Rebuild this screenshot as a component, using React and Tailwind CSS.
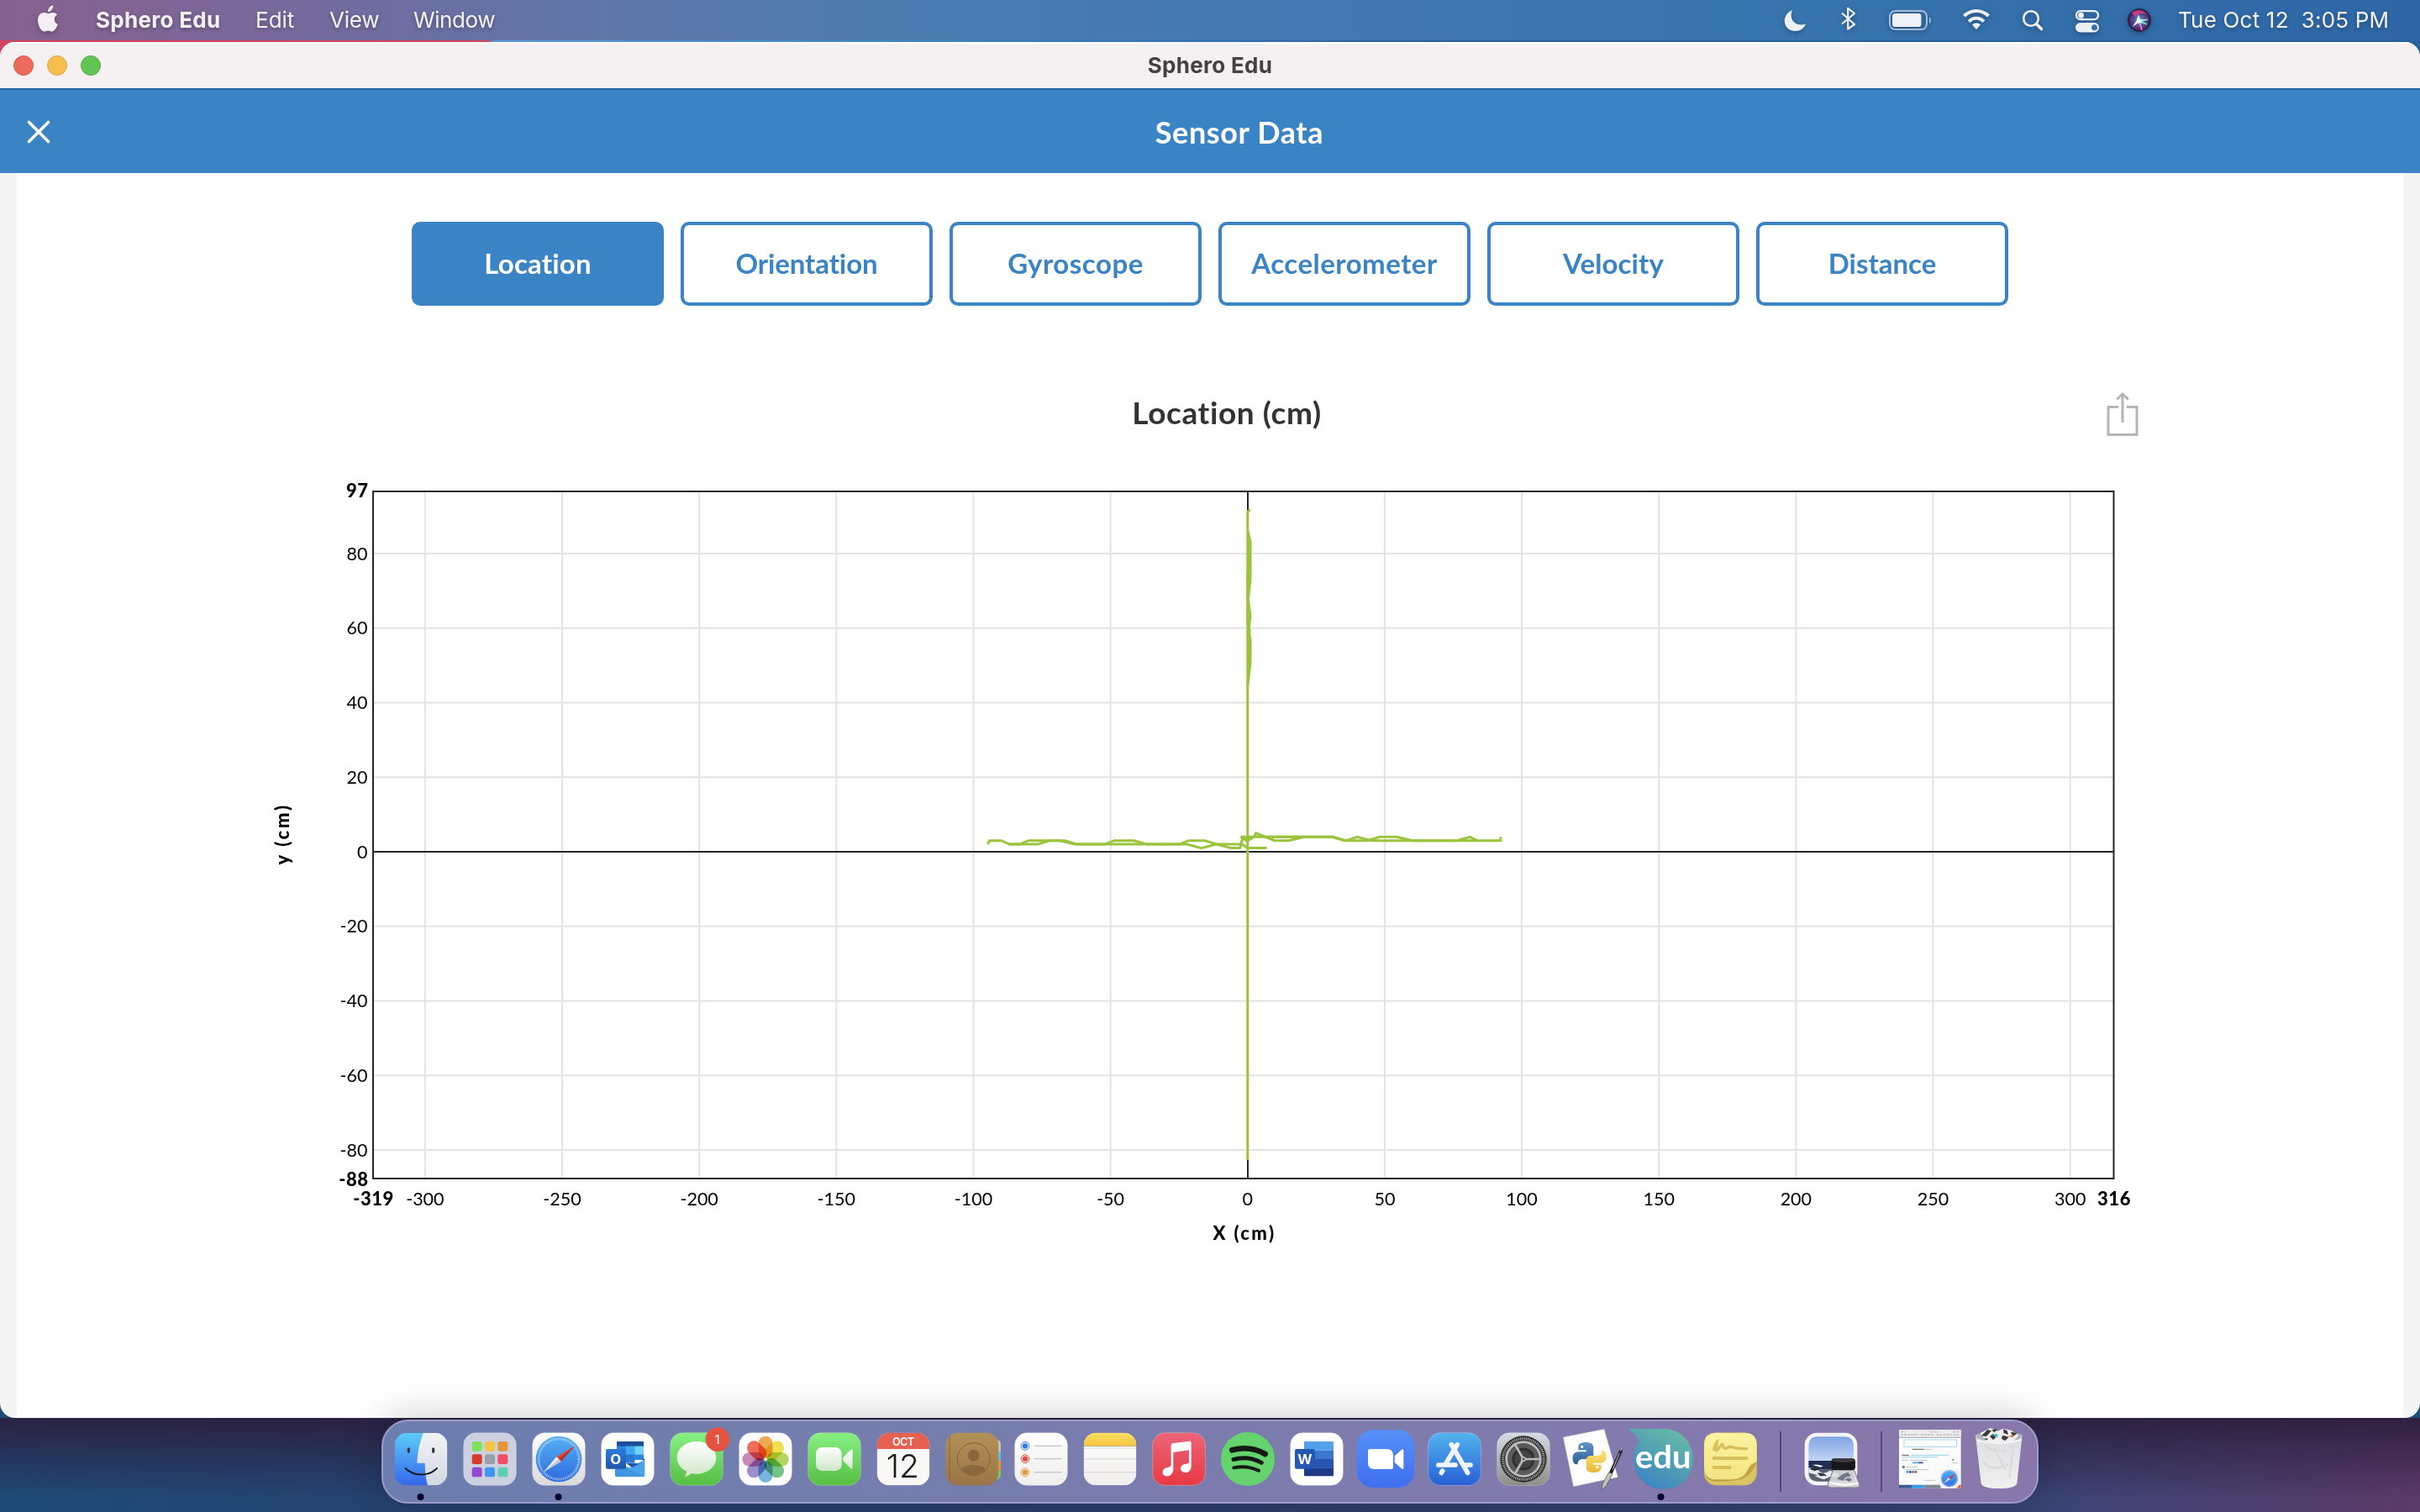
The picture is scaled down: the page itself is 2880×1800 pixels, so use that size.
import React from "react";

/* ---------- menu bar ---------- */

const AppleIcon = () => (
  <svg viewBox="0 0 26 34" className="h-[34px] w-[26px]" fill="#f3eef5">
    <path d="M13.6 10.2c-1.3 0-3-1.3-5-1.2C4.200 9.100 1 12.600 1 18.200c0 6 4 13.300 7.600 13.300 1.600 0 2.600-1.100 4.600-1.100 2 0 2.800 1.100 4.600 1.100 3.200 0 5.900-5.200 7-8.400-2.600-1.100-4-3.200-4-6 0-2.500 1.200-4.300 3.300-5.600C22.700 9.800 20.600 9 18.500 9c-2.200 0-3.600 1.200-4.900 1.200z" />
    <path d="M13 8.200c-.2-3.700 2.600-7.300 6.200-7.900.4 3.700-2.500 7.700-6.200 7.900z" />
  </svg>
);

const StatusIcons = () => (
  <svg viewBox="2110 0 460 48" className="h-[48px] w-[460px] drop-shadow-[0_2px_3px_rgba(0,0,0,0.3)]">
    <defs>
      <radialGradient id="siri" cx="0.5" cy="0.5" r="0.5">
        <stop offset="0" stopColor="#8fb8d8" />
        <stop offset="0.4" stopColor="#4a5fa8" />
        <stop offset="0.8" stopColor="#5b2a6e" />
        <stop offset="1" stopColor="#1d1a38" />
      </radialGradient>
    </defs>
    <path d="M2133 12c-5.500 2.300-9.200 7-9.200 12.800C2123.800 32 2129 37 2136.500 37c5.800 0 10.500-3.200 12.500-8.500-1.800.7-3.500 1-5.300 1-7.200 0-12-4.700-12-11.300 0-2.200.4-4.200 1.300-6.200z" fill="#edf1f6" />
    <path d="M2192 15.500l15 13.500-7.800 5.500V9.800l7.800 6.200-15 12.500" fill="none" stroke="#edf1f6" strokeWidth="2.200" strokeLinejoin="round" />
    <rect x="2249" y="13" width="44" height="22" rx="6.500" fill="none" stroke="#a3bcd7" strokeWidth="2" />
    <rect x="2252" y="16" width="34.500" height="16" rx="3.500" fill="#edf1f6" />
    <path d="M2296 20.500c2.500.5 2.500 6.500 0 7.500z" fill="#a3bcd7" />
    <g fill="none" stroke="#edf1f6" strokeWidth="4">
      <path d="M2337.500 19c8.500-8 20.500-8 29 0" />
      <path d="M2343 25.500c5.500-5 12.500-5 18 0" />
    </g>
    <path d="M2352 35l-5-5.600c2.900-2.600 7.100-2.600 10 0z" fill="#edf1f6" />
    <circle cx="2417" cy="22" r="8.800" fill="none" stroke="#edf1f6" strokeWidth="2.600" />
    <path d="M2423.500 28.500l6 6" stroke="#edf1f6" strokeWidth="3.600" strokeLinecap="round" />
    <rect x="2471" y="13.200" width="26" height="10" rx="5" fill="none" stroke="#edf1f6" strokeWidth="2.300" />
    <circle cx="2476.500" cy="18.200" r="3.500" fill="#edf1f6" />
    <rect x="2470" y="27" width="28" height="11.500" rx="5.700" fill="#edf1f6" />
    <circle cx="2492.500" cy="32.700" r="3.500" fill="#3570ab" />
    <circle cx="2546" cy="24" r="13.500" fill="url(#siri)" stroke="#1c2347" />
    <path d="M2537 15c5-4 13-4 18 2-5-2-12-1-14 3z" fill="#d8407f" opacity=".85" />
    <path d="M2545 17l2 6.500 9-1-7.500 3 5 3.500-6-2 1.500 8-4-8-7.500 5 5-7z" fill="#e9feff" />
    <path d="M2546.500 27l2.500 9" stroke="#f07ab8" strokeWidth="1.800" />
    <path d="M2549 25l7-1.500M2549 26l6 3" stroke="#5fe0b0" strokeWidth="1.500" />
  </svg>
);

const MenuBar = () => (
  <header className="flex h-[48px] w-full items-center bg-[linear-gradient(90deg,#86618f_0%,#7c6799_9%,#6e6da0_16%,#5f77a9_25%,#4a7bb0_38%,#3f78af_60%,#3774ad_75%,#2e66a6_100%)] text-[26px] text-[#f4f2f7] [text-shadow:0_2px_5px_rgba(0,0,0,0.3)]">
    <div className="flex w-[114px] items-center pb-[2px] pl-[44px] drop-shadow-[0_2px_3px_rgba(0,0,0,0.25)]">
      <AppleIcon />
    </div>
    <div className="w-[190px] whitespace-nowrap pb-[2px] font-bold tracking-[0.3px]">Sphero Edu</div>
    <div className="w-[88px] pb-[2px]">Edit</div>
    <div className="w-[100px] pb-[2px] tracking-[-0.2px]">View</div>
    <div className="w-[110px] pb-[2px] tracking-[-0.4px]">Window</div>
    <div className="flex-1" />
    <StatusIcons />
    <div className="w-[310px] whitespace-pre pb-[2px] pl-[22px] tracking-[0.2px]">Tue Oct 12  3:05 PM</div>
  </header>
);

/* ---------- window ---------- */

const TitleBar = () => (
  <div className="flex h-[57px] items-center border-b-[2px] border-[#2467a6] bg-[#f5f1f3] shadow-[inset_0_2px_0_#ffffff]">
    <div className="flex w-[240px] gap-[16px] pl-[16px]">
      <div className="h-[24px] w-[24px] rounded-full border border-[#d8564a] bg-[#ed6a5e]" />
      <div className="h-[24px] w-[24px] rounded-full border border-[#d9a53e] bg-[#f5bf4f]" />
      <div className="h-[24px] w-[24px] rounded-full border border-[#52a840] bg-[#62c655]" />
    </div>
    <div className="flex-1 pb-[1px] text-center text-[26px] font-bold tracking-[0.3px] text-[#444143]">Sphero Edu</div>
    <div className="w-[240px]" />
  </div>
);

const TABS = [
  ["Location", "tracking-[0.2px]"],
  ["Orientation", "tracking-[-0.1px]"],
  ["Gyroscope", "tracking-[0.5px]"],
  ["Accelerometer", "tracking-[0.5px]"],
  ["Velocity", "tracking-[0.1px]"],
  ["Distance", "tracking-[0px]"],
];

const Tabs = () => (
  <nav className="flex justify-center gap-[20px]">
    {TABS.map(([label, tracking], i) => (
      <button
        key={label}
        className={
          "flex h-[100px] w-[300px] items-center justify-center rounded-[10px] border-[4px] border-[#3a84c5] font-['Lato'] text-[33px] font-bold [font-variant-ligatures:none] " +
          tracking +
          (i === 0 ? " bg-[#3a84c5] text-white" : " bg-white text-[#3a84c5]")
        }
      >
        {label}
      </button>
    ))}
  </nav>
);

/* ---------- chart ---------- */

const X0 = 1484.75;
const Y0 = 1014;
const xAt = (v) => X0 + v * 3.263;
const yAt = (v) => Y0 - v * 4.4375;

const X_TICKS = [-300, -250, -200, -150, -100, -50, 0, 50, 100, 150, 200, 250, 300];
const Y_TICKS = [80, 60, 40, 20, 0, -20, -40, -60, -80];

// Horizontal travel: [offset along the run, height in cm]
const RUNS = [
  [[36, 2], [42, 3], [75, 3], [98, 2], [178, 2], [212, 3], [255, 3], [290, 2], [600, 2], [640, 1], [683, 2], [725, 1], [750, 1], [758, 3.8], [772, 3], [790, 4], [795, 5], [848, 3], [888, 3], [932, 4]],
  [[98, 2], [128, 2], [152, 3], [240, 3], [283, 2], [368, 2], [395, 3], [450, 3], [488, 2], [578, 2], [605, 3], [650, 3], [685, 2], [755, 2], [772, 1], [826, 1]],
  [[752, 4], [1012, 4], [1050, 3], [1082, 4], [1120, 3], [1487, 3], [1487, 4]],
  [[752, 4], [768, 3], [780, 4]],
  [[795, 5], [822, 4], [1012, 4], [1045, 3], [1110, 3], [1145, 4], [1193, 4], [1238, 3], [1364, 3], [1400, 4], [1421, 3]],
];
const runPoints = (run) => run.map(([x, v]) => `${(1160 + x / 2.376).toFixed(1)},${yAt(v).toFixed(1)}`).join(" ");

const Chart = () => (
  <svg viewBox="300 560 2260 940" className="h-[940px] w-[2260px] font-['Lato'] text-[21.5px]" fill="#000">
    <g stroke="#e3e3e3" strokeWidth="2">
      {X_TICKS.filter((v) => v !== 0).map((v) => (
        <path key={v} d={`M${xAt(v)} 585V1403`} />
      ))}
      {Y_TICKS.filter((v) => v !== 0).map((v) => (
        <path key={v} d={`M444 ${yAt(v)}H2515`} />
      ))}
    </g>
    <g stroke="#262626" strokeWidth="2" fill="none">
      <path d="M444 1014H2515M1485 585V1403" />
      <rect x="444" y="585" width="2071.500" height="818" />
    </g>
    <g fill="none" stroke="#9ac43c" strokeWidth="3">
      {RUNS.map((run, i) => (
        <polyline key={i} points={runPoints(run)} />
      ))}
      <path d="M1487.700 606.500l-2.900 3V1381" />
      <path d="M1485 632l3 13v45l-2.800 23 2.800 20-2 17 2 12v27l-3 26" />
      <path d="M1485 648l2.300 12v7l-2.300 16v57l2.300 12-2.300 8" />
      <path d="M1486 645V710M1486 762V800" />
    </g>
    <g textAnchor="end">
      {Y_TICKS.map((v) => (
        <text key={v} x="437.500" y={yAt(v) + 7.5}>{v}</text>
      ))}
      <g className="text-[22px] font-black tracking-[0.5px]">
        <text x="438.500" y="592">97</text>
        <text x="438.500" y="1412">-88</text>
      </g>
    </g>
    <g textAnchor="middle">
      {X_TICKS.map((v) => (
        <text key={v} x={xAt(v)} y="1435">{v}</text>
      ))}
      <g className="text-[22px] font-black tracking-[0.5px]">
        <text x="444.500" y="1435">-319</text>
        <text x="2516" y="1435">316</text>
        <text x="1480" y="1476" textLength="73">X (cm)</text>
        <text transform="translate(344 994) rotate(-90)" textLength="71">y (cm)</text>
      </g>
    </g>
  </svg>
);

const ShareIcon = () => (
  <svg viewBox="0 0 40 54" className="h-[54px] w-[40px]" fill="none" stroke="#b5b5b5" strokeWidth="3">
    <path d="M15 18.500H3v33h34v-33H25" />
    <path d="M20 37V4M13.200 9.500L20 3l6.800 6.500" />
  </svg>
);

const Close = () => (
  <svg viewBox="0 0 28 28" className="h-[28px] w-[28px]" stroke="#fff" strokeWidth="3.600" strokeLinecap="round">
    <path d="M2.500 2.500l23 23M25.500 2.500l-23 23" />
  </svg>
);

const SensorWindow = () => (
  <main className="flex h-[1638px] flex-col overflow-hidden rounded-[18px] bg-[#f5f5f5]">
    <TitleBar />
    <div className="flex h-[99px] items-center bg-[#3a84c5] px-[32px] text-white">
      <div className="w-[200px]"><Close /></div>
      <h1 className="flex-1 text-center font-['Lato'] text-[36px] font-bold tracking-[0.6px]">Sensor Data</h1>
      <div className="w-[130px]" />
    </div>
    <section className="mx-[20px] flex-1 bg-white pt-[58px]">
      <Tabs />
      <div className="flex h-[196px] items-start pl-[440px] pt-[98px]">
        <h2 className="w-[2000px] pt-[3px] text-center font-['Lato'] text-[37px] leading-[52px] font-bold tracking-[0.6px] text-[#333] [font-variant-ligatures:none]">
          Location (cm)
        </h2>
        <div className="ml-[46px] pt-[4px]"><ShareIcon /></div>
      </div>
      <div className="pl-[280px]"><Chart /></div>
    </section>
  </main>
);

/* ---------- dock ---------- */

// Each dock tile is 82 px wide; `o` shifts the tile's 3x artwork grid into place.
const Tile = ({ o, children, dot }) => (
  <svg viewBox="0 0 82 96" className="h-[96px] w-[82px] shrink-0 overflow-visible">
    <g transform={`translate(${o} -22) scale(0.33333)`}>{children}</g>
    {dot && <circle cx="40.500" cy="90" r="4" fill="#04042e" />}
  </svg>
);

const Sq = ({ x, fill, w = 188 }) => (
  <rect x={x} y="107" width={w} height="188" rx="44" fill={fill} stroke="#fff" strokeOpacity=".25" strokeWidth="3" />
);

const Grad = ({ id, a, b }) => (
  <linearGradient id={id} x1="0" y1="0" x2="0" y2="1">
    <stop offset="0" stopColor={a} />
    <stop offset="1" stopColor={b} />
  </linearGradient>
);

const Compass = ({ cx, cy, r }) => (
  <g transform={`translate(${cx} ${cy}) scale(${r / 82})`}>
    <circle r="82" fill="url(#safariBlue)" />
    <circle r="72" fill="none" stroke="#d5e8fa" strokeWidth="9" strokeDasharray="2.200 4.080" />
    <path d="M58-48L-8-8 8 8z" fill="#e2463c" />
    <path d="M-54 46L-8-8 8 8z" fill="#f3f3f3" />
    <path d="M58-48L0 0 8 8z" fill="#b93028" />
    <path d="M-54 46L0 0 8 8z" fill="#c4c9cf" />
  </g>
);

const LAUNCH = [
  ["#7de35e", "#f5c242", "#e8963a"],
  ["#d63a2c", "#98a0a6", "#ee4d62"],
  ["#9746cf", "#3d97f0", "#62ceb0"],
];
const PETALS = ["#f0962c", "#f0dc2c", "#a4d03c", "#58b86a", "#5aa8dc", "#8a78c0", "#c070a8", "#ec4c38"];

const Separator = () => (
  <div className="flex h-[72px] w-[38px] shrink-0 justify-center">
    <div className="w-[2px] bg-[#544a80]" />
  </div>
);

const Dock = () => (
  <footer className="relative flex h-[100px] w-[1972px] items-center rounded-[32px] border-[2px] border-[#9a9bc8] bg-[linear-gradient(100deg,#6b7dae_0%,#737ead_25%,#7c7cad_55%,#8579ad_80%,#8877aa_100%)] px-[4px] shadow-[0_0_50px_rgba(0,0,0,0.24)]">
    <svg className="absolute h-0 w-0">
      <defs>
        <Grad id="finderL" a="#5ecbf8" b="#3467ea" />
        <Grad id="finderR" a="#f2f2f4" b="#d3d9e2" />
        <Grad id="white" a="#ffffff" b="#d9d9d9" />
        <Grad id="safariBlue" a="#55b0f2" b="#2f6be0" />
        <Grad id="green" a="#88f082" b="#56be44" />
        <Grad id="bubble" a="#ffffff" b="#cfe6c8" />
        <Grad id="brown" a="#b39257" b="#9a7446" />
        <Grad id="paper" a="#ffffff" b="#efeeec" />
        <Grad id="note" a="#f9df62" b="#f6c63e" />
        <Grad id="music" a="#ee6478" b="#e63a44" />
        <Grad id="zoomBg" a="#5690f7" b="#3f6ff0" />
        <Grad id="store" a="#51b4ee" b="#2a5fd6" />
        <Grad id="gearBg" a="#d4dde4" b="#8f8c88" />
        <linearGradient id="eduBg" x1="0.8" y1="0" x2="0.2" y2="1">
          <stop offset="0" stopColor="#66bda6" />
          <stop offset="1" stopColor="#3b7fc4" />
        </linearGradient>
        <Grad id="sticky" a="#fbf3a0" b="#f4e584" />
        <Grad id="sky" a="#7fa3e4" b="#c3d6f2" />
        <Grad id="pyBlue" a="#5f95c9" b="#2f5f94" />
        <Grad id="pyYellow" a="#fbe27a" b="#eab93a" />
        <Grad id="trash" a="#dcdce0" b="#f0f0f0" />
        <Grad id="outlook" a="#2f7bd8" b="#1f55ae" />
        <clipPath id="finderClip"><rect x="89" y="107" width="188" height="188" rx="44" /></clipPath>
        <clipPath id="calClip"><rect x="311" y="107" width="188" height="188" rx="44" /></clipPath>
        <clipPath id="noteClip"><rect x="1049" y="107" width="188" height="188" rx="44" /></clipPath>
      </defs>
    </svg>

    {/* Finder */}
    <Tile o={-20} dot>
      <g clipPath="url(#finderClip)">
        <rect x="89" y="107" width="188" height="188" fill="url(#finderL)" />
        <path d="M192 107c-14 34-22 70-23 108h28c0 28 3 54 10 80h70V107z" fill="url(#finderR)" />
      </g>
      <path d="M139 164v11M227 164v11" stroke="#26303f" strokeWidth="9" strokeLinecap="round" />
      <path d="M127 234c32 30 82 30 113 0" fill="none" stroke="#15181f" strokeWidth="5.500" strokeLinecap="round" />
    </Tile>
    {/* Launchpad */}
    <Tile o={-102}>
      <Sq x={335} fill="#ccd0e1" />
      {LAUNCH.map((row, r) => row.map((c, i) => (
        <rect key={r + "-" + i} x={365 + i * 46} y={138 + r * 46} width="36" height="35" rx="8" fill={c} />
      )))}
    </Tile>
    {/* Safari */}
    <Tile o={-184} dot>
      <Sq x={581} fill="url(#white)" />
      <Compass cx={675} cy={201} r={82} />
    </Tile>
    {/* Outlook */}
    <Tile o={-266}>
      <Sq x={827} fill="#fff" />
      <path d="M882 142q0-4 4-4h88q4 0 4 4v62h-96z" fill="#2a86dc" />
      <path d="M882 142q0-4 4-4h88q4 0 4 4v13h-96z" fill="#1c4f98" />
      <path d="M946 155h32v30h-32z" fill="#6fd3fb" />
      <path d="M914 155h32v30h-32z" fill="#3fa8ee" />
      <path d="M914 185h32v30h-32z" fill="#2c78d2" />
      <path d="M876 216l54 16 52-30v57q0 5-5 5h-96q-5 0-5-5z" fill="#4ba4e8" />
      <path d="M916 216h50l-30 15z" fill="#1d58a8" />
      <path d="M876 216l106 46q-2 2-5 2h-96q-5 0-5-5z" fill="#3f97e2" />
      <rect x="843" y="165" width="72" height="71" rx="6" fill="url(#outlook)" />
      <text x="878.500" y="218" textAnchor="middle" fontSize="49" fontWeight="700" fill="#fff" className="font-['Open_Sans']">O</text>
      <circle cx="979" cy="202" r="2.500" fill="#111" />
    </Tile>
    {/* Messages */}
    <Tile o={-348}>
      <Sq x={1073} fill="url(#green)" />
      <path d="M1167 138c39 0 70 26 70 58s-31 58-70 58c-7 0-13-1-19-2-6 6-15 11-25 12 5-6 8-13 8-19-21-11-34-29-34-49 0-32 31-58 70-58z" fill="url(#bubble)" />
      <circle cx="1242" cy="131" r="43" fill="#e5523f" />
      <text x="1241" y="148" textAnchor="middle" fontSize="45" fill="#fff">1</text>
    </Tile>
    {/* Photos */}
    <Tile o={-430}>
      <Sq x={1319} fill="#fdfdfd" />
      {PETALS.map((c, i) => (
        <rect key={c} x="1388" y="119" width="50" height="78" rx="25" fill={c} opacity=".82" transform={`rotate(${i * 45} 1413 202)`} className="mix-blend-multiply" />
      ))}
      <circle cx="1413" cy="202" r="4" fill="#fff" />
    </Tile>
    {/* FaceTime */}
    <Tile o={-12}>
      <Sq x={65} fill="url(#green)" />
      <rect x="93" y="159" width="92" height="84" rx="22" fill="url(#bubble)" />
      <path d="M190 196l26-27q8-7 8 3v58q0 10-8 3l-26-26z" fill="url(#bubble)" />
    </Tile>
    {/* Calendar */}
    <Tile o={-94}>
      <g clipPath="url(#calClip)">
        <rect x="311" y="107" width="188" height="188" fill="#f9f8f7" />
        <rect x="311" y="107" width="188" height="58" fill="#e5604f" />
      </g>
      <text x="405" y="152" textAnchor="middle" fontSize="38" fontWeight="600" fill="#fff" textLength="78">OCT</text>
      <text x="403" y="267" textAnchor="middle" fontSize="116" fontWeight="300" fill="#1c1c1c" textLength="118" lengthAdjust="spacingAndGlyphs">12</text>
    </Tile>
    {/* Contacts */}
    <Tile o={-176}>
      <path d="M735 130q18 4 18 20v24h-18z" fill="#c9c9c9" />
      <path d="M735 174h18v34h-18z" fill="#5fc0ee" />
      <path d="M735 208h18v34h-18z" fill="#f2922c" />
      <path d="M735 242h18v12q0 16-18 22z" fill="#6ad567" />
      <rect x="557" y="107" width="188" height="188" rx="44" fill="url(#brown)" />
      <path d="M570 122v158" stroke="#83633a" strokeWidth="3" />
      <circle cx="656" cy="201" r="58" fill="none" stroke="#80613a" strokeWidth="3" />
      <circle cx="656" cy="188" r="21" fill="#8a693e" />
      <path d="M612 238c20-22 66-22 88 0-18 28-68 28-88 0z" fill="#8a693e" />
    </Tile>
    {/* Reminders */}
    <Tile o={-258}>
      <Sq x={803} fill="url(#paper)" />
      {[["#2f74e8", 154], ["#e4473a", 200], ["#ea9132", 248]].map(([c, y]) => (
        <g key={y}>
          <circle cx="840" cy={y} r="9.500" fill={c} />
          <circle cx="840" cy={y} r="14.500" fill="none" stroke={c} strokeWidth="3" />
          <path d={`M873 ${y}h98`} stroke="#b5b5bb" strokeWidth="3" />
        </g>
      ))}
    </Tile>
    {/* Notes */}
    <Tile o={-340}>
      <g clipPath="url(#noteClip)">
        <rect x="1049" y="107" width="188" height="188" fill="url(#paper)" />
        <rect x="1049" y="107" width="188" height="47" fill="url(#note)" />
        <path d="M1049 155h188" stroke="#b9a98a" strokeWidth="3" />
        <path d="M1052 163h184" stroke="#b8b8b8" strokeWidth="3" strokeDasharray="3 4" />
        <path d="M1049 201h188M1049 248h188" stroke="#d2d2d2" strokeWidth="3" />
      </g>
    </Tile>
    {/* Music */}
    <Tile o={-422}>
      <Sq x={1295} fill="url(#music)" />
      <path d="M1361 151q0-5 5-6l60-8q7-1 7 6v84c0 12-8 22-21 22-10 0-17-6-17-14 0-10 9-16 19-17 8-1 11-3 11-9v-40l-56 8v59c0 14-9 26-22 26-10 0-16-6-16-14 0-10 8-16 17-17 9-1 13-4 13-11z" fill="#fff" />
    </Tile>
    {/* Spotify */}
    <Tile o={-4}>
      <circle cx="135" cy="201" r="96" fill="#65d46e" />
      <g fill="none" stroke="#121a12" strokeLinecap="round">
        <path d="M79 169c40-11 82-7 118 14" strokeWidth="20" />
        <path d="M84 202c35-9 70-5 100 12" strokeWidth="15" />
        <path d="M85 232c31-7 61-3 89 10" strokeWidth="12" />
      </g>
    </Tile>
    {/* Word */}
    <Tile o={-86}>
      <Sq x={287} fill="#fff" />
      <path d="M336 170v-28q0-4 4-4h97q4 0 4 4v28z" fill="#55a0ea" />
      <path d="M336 170h105v31H336z" fill="#3c76cc" />
      <path d="M336 201h105v31H336z" fill="#2755b4" />
      <path d="M336 232h105v26q0 4-4 4h-97q-4 0-4-4z" fill="#1d3b88" />
      <rect x="303" y="165" width="72" height="71" rx="6" fill="#2456b4" />
      <text x="339" y="218" textAnchor="middle" fontSize="49" fontWeight="700" fill="#fff" textLength="49" lengthAdjust="spacingAndGlyphs" className="font-['Open_Sans']">W</text>
    </Tile>
    {/* Zoom */}
    <Tile o={-168}>
      <rect x="524" y="97" width="206" height="206" rx="58" fill="url(#zoomBg)" />
      <path d="M564 172q0-7 7-7h60q23 0 23 23v42q0 7-7 7h-60q-23 0-23-23zM659 190l25-22q7-5 7 3v61q0 8-7 3l-25-22z" fill="#fff" />
    </Tile>
    {/* App Store */}
    <Tile o={-250}>
      <Sq x={779} fill="url(#store)" />
      <g stroke="#f1f6fd" strokeWidth="17" strokeLinecap="round" fill="none">
        <path d="M883 149l-42 70M816 222h60M830 243l-4 7" />
        <path d="M862 149l58 101M908 222h22" />
      </g>
    </Tile>
    {/* System Preferences */}
    <Tile o={-332}>
      <Sq x={1025} fill="url(#gearBg)" />
      <circle cx="1119" cy="201" r="83" fill="#2f2f30" />
      <circle cx="1119" cy="201" r="73" fill="none" stroke="#a9a9a9" strokeWidth="9" strokeDasharray="3.500 3.500" />
      <circle cx="1119" cy="201" r="61" fill="#5b5b5b" stroke="#bcbec0" strokeWidth="8" />
      <circle cx="1119" cy="201" r="36" fill="#434343" stroke="#303030" strokeWidth="9" />
      <path d="M1119 201h61M1119 201l-31-54M1119 201l-31 54" stroke="#b9bbbd" strokeWidth="8" />
      <circle cx="1119" cy="201" r="9" fill="#b9bbbd" />
      <circle cx="1119" cy="201" r="4" fill="#444" />
    </Tile>
    {/* IDLE */}
    <Tile o={-414}>
      <path d="M1260 122l148-29 49 173-160 34z" fill="#fdfdfd" stroke="#8b84a0" strokeWidth="2" />
      <path d="M1315 158c0-12 12-17 27-17 17 0 27 6 27 18v26c0 10-7 16-17 16h-22c-11 0-17 7-17 18-13 3-18-8-18-22 0-13 7-22 20-22h28v-6h-28z" fill="url(#pyBlue)" />
      <path d="M1397 231c0 12-12 18-27 18-17 0-27-7-27-19v-25c0-10 7-16 17-16h22c11 0 17-7 17-18 12-2 16 8 16 22 0 13-7 22-20 22h-27v6h29z" fill="url(#pyYellow)" />
      <circle cx="1328" cy="157" r="5" fill="#fff" />
      <circle cx="1383" cy="230" r="5" fill="#fff" />
      <path d="M1467 172l-37 80" stroke="#1d2028" strokeWidth="12" strokeLinecap="round" />
      <path d="M1470 160l-5 13M1462 180l-24 58" stroke="#9da1b4" strokeWidth="4" />
      <path d="M1424 248l14 6-22 40-18 18 4-24z" fill="#c3c0b9" stroke="#55524f" strokeWidth="2" />
    </Tile>
    {/* Sphero Edu */}
    <Tile o={4} dot>
      <path d="M-3 93h126c56 0 102 48 102 108s-46 108-106 108-108-48-108-108c0-24 8-45 21-66-8-18-20-28-34-34-5-3-5-8-1-8z" fill="url(#eduBg)" />
      <text x="118" y="235" textAnchor="middle" fontSize="114" fontWeight="700" fill="#fff" textLength="200" lengthAdjust="spacingAndGlyphs" className="font-['Lato']">edu</text>
    </Tile>
    {/* Stickies */}
    <Tile o={-78}>
      <rect x="264" y="107" width="188" height="188" rx="44" fill="#d9c463" />
      <path d="M308 107h100q44 0 44 44v62q-14 40-52 60-50 10-92 8-44 0-44-44v-86q0-44 44-44z" fill="#c2a443" />
      <path d="M308 107h100q44 0 44 44v60q-24 6-34 32-14 28-50 31h-60q-44 0-44-44v-79q0-44 44-44z" fill="url(#sticky)" />
      <path d="M299 171c2-16 5-26 11-31-2 14-6 27-3 31 8-1 13-20 23-23 4 6 0 14 8 15 10 0 12-8 22-6 14 6 34 8 60 6" fill="none" stroke="#d8bf5c" strokeWidth="10" />
      <path d="M294 198h126M294 231h67" stroke="#d8bf5c" strokeWidth="12" />
    </Tile>

    <Separator />

    {/* Preview */}
    <Tile o={-198}>
      <rect x="623" y="107" width="188" height="188" rx="44" fill="#f4f4f6" />
      <path d="M637 207v-52q0-34 34-34h93q34 0 34 34v52z" fill="url(#sky)" />
      <path d="M637 207h161v30H637z" fill="#1f2d55" />
      <path d="M637 236h161v45H671q-34 0-34-34z" fill="#5a6270" />
      <path d="M637 232q28 2 40 14t36-4l30 10v14l-50-2-56-14zM650 222q20-4 40 4l-10 4zM660 262l30-10 20 14-20 8z" fill="#e6edf4" />
      <path d="M640 236l20-8 16 10-18 6zM668 250l20 2 16 8-26 2zM690 236l16-6 14 6z" fill="#33302f" />
      <path d="M727 234h70l22 56q2 12-12 13h-88q-16-2-13-13z" fill="#d9dadb" fillOpacity=".9" stroke="#76767a" strokeWidth="3" />
      <path d="M738 272l18-16 14 6-8 16zM758 255l20-7 10 14-18 4zM766 274l14-6 12 6-10 8z" fill="#6d7687" />
      <path d="M712 284q50 18 102 2" fill="none" stroke="#fff" strokeWidth="6" />
      <rect x="718" y="199" width="86" height="42" rx="12" fill="#18181a" />
      <ellipse cx="761" cy="206" rx="40" ry="7" fill="#3a3a3e" />
    </Tile>

    <Separator />

    {/* Minimised browser window */}
    <Tile o={-318}>
      <rect x="960" y="96" width="221" height="209" fill="#fbfbfb" />
      <path d="M960 96h221v28H960z" fill="#ececee" />
      <path d="M960 124h221" stroke="#b5b5b8" strokeWidth="4" />
      <path d="M967 104h16M1070 104h28M1153 104h22M967 114h62M1038 114h48M1094 114h80" stroke="#b9b9bd" strokeWidth="4" strokeDasharray="8 4" />
      <rect x="978" y="132" width="187" height="25" fill="#fff" stroke="#9bd8e6" strokeWidth="3" />
      <path d="M1007 166h42M970 187h26" stroke="#555" strokeWidth="3" />
      <path d="M1050 166h28M970 205h22M998 205h62M1150 214h20M986 229h40M985 239h80M1050 277h40" stroke="#c0c0c0" strokeWidth="3" />
      <path d="M1002 187h136M972 194h128" stroke="#8fd2e4" strokeWidth="3" />
      <path d="M1008 214h18" stroke="#3fa7dc" strokeWidth="5" />
      <path d="M1028 214h18" stroke="#2f4d8f" strokeWidth="5" />
      <circle cx="1153" cy="204" r="3" fill="#d33" />
      <circle cx="976" cy="229" r="5" fill="#777" />
      <circle cx="990" cy="247" r="4.500" fill="#38a1dc" />
      <circle cx="1000" cy="247" r="4.500" fill="#3b5998" />
      <circle cx="1010" cy="247" r="4.500" fill="#3c8ac8" />
      <circle cx="1020" cy="247" r="4.500" fill="#d9433a" />
      <path d="M960 293h45v12h-45z" fill="#3b5998" />
      <path d="M1005 293h44v12h-44z" fill="#2f97ee" />
      <path d="M1049 293h60v12h-60z" fill="#7d8791" />
      <path d="M1165 293h16v12h-16z" fill="#e4624c" />
      <rect x="1105" y="235" width="70" height="70" rx="16" fill="#f1f1f1" />
      <Compass cx={1140} cy={270} r={30} />
    </Tile>
    {/* Trash */}
    <Tile o={-400}>
      <path d="M1233 116q83-30 167 0l-19 172q-6 18-64 18t-64-18z" fill="url(#trash)" />
      <ellipse cx="1317" cy="120" rx="82" ry="19" fill="#b6b5c4" />
      <path d="M1250 108l36-18 26 12 18-10 30 6 26 18-18 22-50 4-46-2z" fill="#f0f0f0" />
      <path d="M1254 118l22-22 14 4-18 20zM1290 98l20-6-8 14zM1332 94l14 6 4 14-16-6zM1358 104l24 4-14 12zM1284 120l12-10 10 14-10 8zM1330 116l22 6-14 14-12-8zM1262 126l16 2-6 6z" fill="#3a3838" />
      <path d="M1290 114l20-4 4 14z" fill="#35b6c9" />
      <path d="M1350 120l14-6 4 10z" fill="#d9783a" />
      <path d="M1237 134q80 22 160-2" fill="none" stroke="#fff" strokeWidth="4" opacity=".8" />
      <path d="M1266 150q22 28 76 20M1260 210q30 40 90 10M1300 160l40 80M1368 150l-14 120" fill="none" stroke="#cfcfd3" strokeWidth="8" opacity=".45" />
    </Tile>
  </footer>
);

export default function App() {
  return (
    <div className="flex h-[1800px] w-[2880px] flex-col overflow-hidden bg-[linear-gradient(180deg,transparent_0,transparent_1660px,rgba(30,20,50,0.35)_1690px,transparent_1780px),linear-gradient(180deg,transparent_0,transparent_900px,#1f4a77_900px),linear-gradient(90deg,#d3445f_0%,#d3445f_20.2%,#5a9bd2_20.4%,#2a5f9c_60%,#2a5f9c_100%)] font-['Inter',sans-serif]">
      <MenuBar />
      <div className="bg-[linear-gradient(0deg,#1f4a77_0,#1f4a77_200px,transparent_200px)] pt-[2px]">
        <SensorWindow />
      </div>
      <div className="relative flex h-[112px] justify-center bg-[linear-gradient(180deg,rgba(43,29,60,0.9)_0,rgba(43,29,60,0)_85%),linear-gradient(90deg,#1f4a77_0%,#27426f_20%,#2e3f6c_50%,#3b4474_85%,#5a3a68_100%)] pt-[2px]">
        <Dock />
      </div>
    </div>
  );
}
